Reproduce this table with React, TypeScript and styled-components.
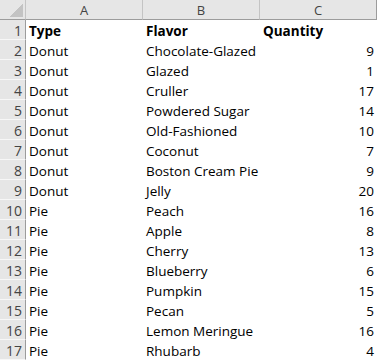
import React from 'react';
import styled, { createGlobalStyle } from 'styled-components';

const GlobalStyle = createGlobalStyle`
  html, body {
    margin: 0;
    padding: 0;
    background: #ffffff;
  }
`;

const rows: [string, string, string][] = [
  ['Type', 'Flavor', 'Quantity'],
  ['Donut', 'Chocolate-Glazed', '9'],
  ['Donut', 'Glazed', '1'],
  ['Donut', 'Cruller', '17'],
  ['Donut', 'Powdered Sugar', '14'],
  ['Donut', 'Old-Fashioned', '10'],
  ['Donut', 'Coconut', '7'],
  ['Donut', 'Boston Cream Pie', '9'],
  ['Donut', 'Jelly', '20'],
  ['Pie', 'Peach', '16'],
  ['Pie', 'Apple', '8'],
  ['Pie', 'Cherry', '13'],
  ['Pie', 'Blueberry', '6'],
  ['Pie', 'Pumpkin', '15'],
  ['Pie', 'Pecan', '5'],
  ['Pie', 'Lemon Meringue', '16'],
  ['Pie', 'Rhubarb', '4'],
];

const App: React.FC = () => {
  return (
    <>
      <GlobalStyle />
      <Sheet>
        <Corner>
          <CornerMark />
        </Corner>
        {['A', 'B', 'C'].map((col) => (
          <ColHeader key={col}>{col}</ColHeader>
        ))}
        {rows.map((row, i) => (
          <React.Fragment key={i}>
            <RowHeader>{i + 1}</RowHeader>
            <Cell $bold={i === 0}>{row[0]}</Cell>
            <Cell $bold={i === 0}>{row[1]}</Cell>
            <Cell $bold={i === 0} $numeric={i > 0}>
              {row[2]}
            </Cell>
          </React.Fragment>
        ))}
      </Sheet>
    </>
  );
};
export default App;

const Sheet = styled.div`
  display: grid;
  grid-template-columns: 26px 117px 117px 117px;
  grid-template-rows: 20px repeat(17, 20px);
  width: 377px;
  font-family: 'Open Sans', 'Liberation Sans', sans-serif;
  font-size: 13px;
  color: #000;
`;

const Corner = styled.div`
  position: relative;
  background: #e6e6e6;
  border-right: 1px solid #c4c4c4;
  border-bottom: 1px solid #9c9c9c;
`;

const CornerMark = styled.div`
  position: absolute;
  right: 2px;
  bottom: 2px;
  width: 14px;
  height: 14px;
  background: linear-gradient(135deg, transparent 50%, #c3c3c3 50%);
`;

const ColHeader = styled.div`
  display: flex;
  align-items: center;
  justify-content: center;
  padding-top: 1px;
  background: #e6e6e6;
  border-right: 1px solid #c4c4c4;
  border-bottom: 1px solid #9c9c9c;
  color: #444;
  font-size: 13px;
  &:nth-child(4) {
    border-right: 1px solid #9c9c9c;
  }
`;

const RowHeader = styled.div`
  display: flex;
  align-items: center;
  justify-content: flex-end;
  padding: 1px 3px 0 0;
  background: #e6e6e6;
  border-right: 1px solid #9c9c9c;
  border-bottom: 1px solid #f7f7f7;
  color: #444;
  font-size: 14px;
`;

const Cell = styled.div<{ $bold?: boolean; $numeric?: boolean }>`
  display: flex;
  align-items: center;
  justify-content: ${(p) => (p.$numeric ? 'flex-end' : 'flex-start')};
  padding: 1px 3px 0 3px;
  font-size: 13.5px;
  font-weight: ${(p) => (p.$bold ? 700 : 400)};
  white-space: nowrap;
  overflow: visible;
`;
